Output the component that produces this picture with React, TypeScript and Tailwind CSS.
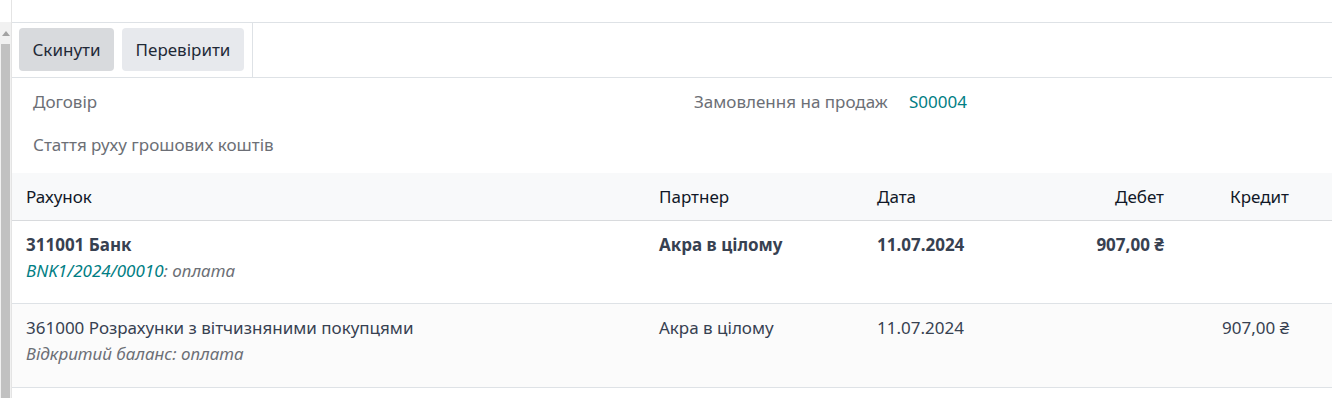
import React from "react";

const font = { fontFamily: '"Noto Sans", "Open Sans", sans-serif' };

type Line = {
  account: string;
  ref?: string;
  label: string;
  partner: string;
  date: string;
  debit: string;
  credit: string;
  bold?: boolean;
  shaded?: boolean;
};

const lines: Line[] = [
  {
    account: "311001 Банк",
    ref: "BNK1/2024/00010",
    label: "оплата",
    partner: "Акра в цілому",
    date: "11.07.2024",
    debit: "907,00 ₴",
    credit: "",
    bold: true,
  },
  {
    account: "361000 Розрахунки з вітчизняними покупцями",
    label: "Відкритий баланс: оплата",
    partner: "Акра в цілому",
    date: "11.07.2024",
    debit: "",
    credit: "907,00 ₴",
    shaded: true,
  },
];

const cols = "grid grid-cols-[635px_218px_188px_123px_125px_1fr]";

function Scrollbar() {
  return (
    <div className="w-[12px] shrink-0 flex flex-col bg-[#f1f1f1] border-r border-[#e4e4e4]">
      <div className="h-[22px] bg-white" />
      <div className="h-[22px] flex items-center justify-center">
        <svg width="8" height="5" viewBox="0 0 8 5">
          <path d="M0 5 L4 0 L8 5 Z" fill="#a3a3a3" />
        </svg>
      </div>
      <div className="flex-1 bg-[#c1c1c1] mx-[1px]" />
    </div>
  );
}

export default function App() {
  return (
    <div className="flex h-[398px] w-[1332px] overflow-hidden bg-white text-[17px]" style={font}>
      <Scrollbar />
      <div className="flex-1 flex flex-col">
        <div className="h-[22px]" />
        {/* button bar */}
        <div className="flex border-y border-[#dee2e6] h-[56px]">
          <div className="flex gap-2 pl-[7px] pr-2 pt-[5px] border-r border-[#dee2e6]">
            <button className="h-[43px] w-[95px] rounded bg-[#d8dadd] text-[#1f2937]">Скинути</button>
            <button className="h-[43px] w-[122px] rounded bg-[#e7e9ed] text-[#1f2937]">Перевірити</button>
          </div>
        </div>

        {/* fields */}
        <div className="flex pl-[21px] pt-[11px] h-[95px]">
          <div className="w-[661px] flex flex-col gap-[17px] text-[#6c6f76]">
            <div className="h-[26px] leading-[26px]">Договір</div>
            <div className="h-[26px] leading-[26px]">Стаття руху грошових коштів</div>
          </div>
          <div className="flex h-[26px] leading-[26px]">
            <span className="w-[215px] text-[#6c6f76]">Замовлення на продаж</span>
            <span className="text-[#017e84]">S00004</span>
          </div>
        </div>

        {/* table */}
        <div className={`${cols} h-[48px] items-center bg-[#f8f9fa] border-b border-[#d8dadd] text-[#111827]`}>
          <div className="pl-[14px]">Рахунок</div>
          <div className="pl-3">Партнер</div>
          <div className="pl-3">Дата</div>
          <div className="pr-3 text-right">Дебет</div>
          <div className="pr-3 text-right">Кредит</div>
          <div />
        </div>
        {lines.map((l, i) => (
          <div
            key={i}
            className={`${cols} border-b border-[#dee2e6] pt-[11px] text-[#374151] ${l.shaded ? "h-[84px] bg-[#fbfbfb]" : "h-[83px] bg-white"} ${l.bold ? "font-bold" : ""}`}
          >
            <div className="pl-[14px]">
              <div className="leading-[26px]">{l.account}</div>
              <div className="leading-[26px] italic font-normal text-[#6c6f76]">
                {l.ref && <span className="text-[#017e84]">{l.ref}</span>}
                {l.ref ? ": " : ""}
                {l.label}
              </div>
            </div>
            <div className="pl-3 leading-[26px]">{l.partner}</div>
            <div className="pl-3 leading-[26px]">{l.date}</div>
            <div className="pr-3 text-right leading-[26px]">{l.debit}</div>
            <div className="pr-3 text-right leading-[26px]">{l.credit}</div>
            <div />
          </div>
        ))}
      </div>
    </div>
  );
}
